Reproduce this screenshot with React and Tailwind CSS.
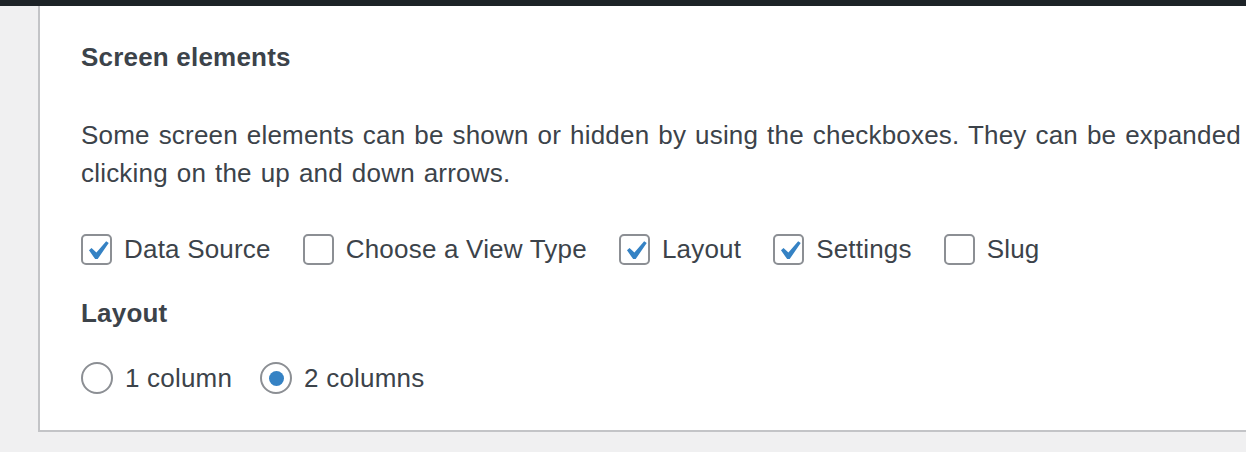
import React from 'react';

const font = { fontFamily: '"Liberation Sans", Arial, sans-serif' };

const Check = () => (
    <svg viewBox="0 0 20 20" className="absolute -left-[5px] -top-[4px] w-[38px] h-[38px]">
        <path d="M14.83 4.89l1.34.94-5.81 8.38H9.02L5.78 9.67l1.34-1.25 2.57 2.4z" fill="#3582c4" />
    </svg>
);

const CheckItem = ({ label, checked }) => (
    <label className="flex items-center gap-3 mr-8">
        <span className="relative w-[31px] h-[31px] rounded-[5px] border-2 border-[#8c8f94] bg-white shrink-0">
            {checked && <Check />}
        </span>
        <span>{label}</span>
    </label>
);

const RadioItem = ({ label, checked }) => (
    <label className="flex items-center gap-3 mr-7">
        <span className="w-[32px] h-[32px] rounded-full border-2 border-[#8c8f94] bg-white flex items-center justify-center shrink-0">
            {checked && <span className="w-[15px] h-[15px] rounded-full bg-[#3582c4]" />}
        </span>
        <span>{label}</span>
    </label>
);

export default function App() {
    const boxes = [
        { label: 'Data Source', checked: true },
        { label: 'Choose a View Type', checked: false },
        { label: 'Layout', checked: true },
        { label: 'Settings', checked: true },
        { label: 'Slug', checked: false },
    ];

    return (
        <div className="h-[452px] w-[1246px] overflow-hidden bg-[#f0f0f1] text-[#3c434a] text-[26px] tracking-[0.2px]" style={font}>
            <div className="h-[6px] bg-[#1d2327]" />
            <div className="pl-[38px]">
                <div className="w-[1400px] bg-white border-l-2 border-b-2 border-[#c3c4c7] pl-[41px] pt-[33px] pb-[36px]">
                    <h5 className="font-bold leading-[36px]">Screen elements</h5>
                    <p className="mt-[41px] leading-[38px] whitespace-nowrap [word-spacing:1.5px]">
                        Some screen elements can be shown or hidden by using the checkboxes. They can be expanded and collapsed by
                        <br />
                        clicking on the up and down arrows.
                    </p>
                    <div className="flex items-center mt-[41px] h-[32px]">
                        {boxes.map(b => <CheckItem key={b.label} {...b} />)}
                    </div>
                    <h5 className="font-bold leading-[36px] mt-[30px]">Layout</h5>
                    <div className="flex items-center mt-[31px] h-[32px]">
                        <RadioItem label="1 column" />
                        <RadioItem label="2 columns" checked />
                    </div>
                </div>
            </div>
        </div>
    );
}
